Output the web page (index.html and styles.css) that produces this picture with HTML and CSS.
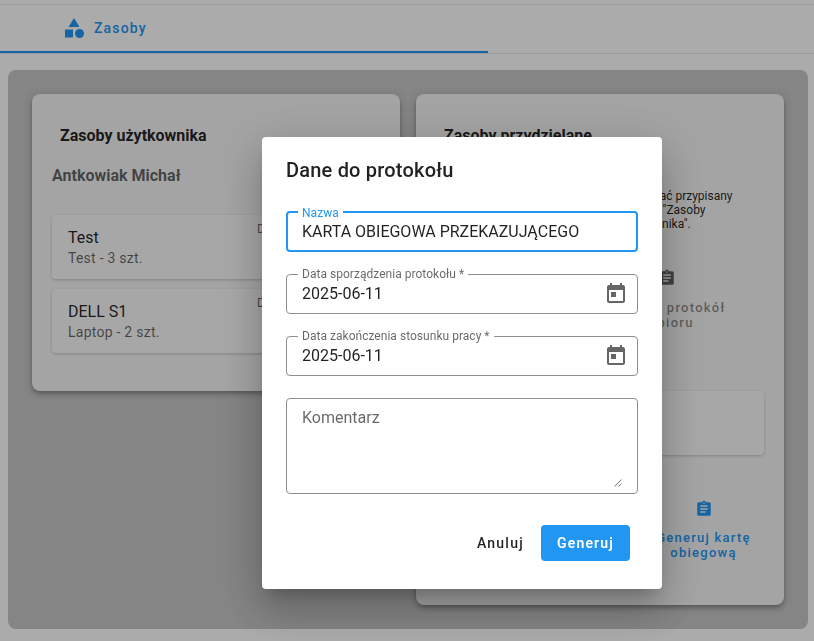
FILE: index.html
```html
<!DOCTYPE html>
<html lang="pl">
<head>
<meta charset="utf-8">
<title>Zasoby</title>
<link rel="stylesheet" href="styles.css">
</head>
<body>
<div class="page">
  <header class="topbar"></header>
  <nav class="tabs">
    <div class="tab">
      <svg class="tab-icon" viewBox="0 0 24 24"><path d="M11,13.5V21.5H3V13.5H11M12,2L17.5,11H6.5L12,2M17.5,13C20,13 22,15 22,17.5C22,20 20,22 17.5,22C15,22 13,20 13,17.5C13,15 15,13 17.5,13Z"/></svg>
      <span>Zasoby</span>
    </div>
  </nav>
  <main class="panel">
    <section class="card card-left">
      <h2 class="card-title">Zasoby użytkownika</h2>
      <div class="user">Antkowiak Michał</div>
      <div class="item">
        <div><div class="item-name">Test</div><div class="item-sub">Test - 3 szt.</div></div>
        <div class="item-date">Data: 2025-06-11</div>
      </div>
      <div class="item">
        <div><div class="item-name">DELL S1</div><div class="item-sub">Laptop - 2 szt.</div></div>
        <div class="item-date">Data: 2025-06-11</div>
      </div>
    </section>
    <section class="card card-right">
      <h2 class="card-title">Zasoby przydzielane</h2>
      <p class="hint">W celu przydzielenia zasobu należy wybrać przypisany<br>zasób, znajdujący się po prawej, w sekcji "Zasoby<br>znajdujące się w odrębnej sekcji użytkownika".</p>
      <div class="action action-grey">
        <svg class="action-icon" viewBox="0 0 24 24"><path d="M17,9H7V7H17M17,13H7V11H17M14,17H7V15H14M12,3A1,1 0 0,1 13,4A1,1 0 0,1 12,5A1,1 0 0,1 11,4A1,1 0 0,1 12,3M19,3H14.82C14.4,1.84 13.3,1 12,1C10.7,1 9.6,1.84 9.18,3H5A2,2 0 0,0 3,5V19A2,2 0 0,0 5,21H19A2,2 0 0,0 21,19V5A2,2 0 0,0 19,3Z"/></svg>
        <span>Generuj protokół<br>odbioru</span>
      </div>
      <div class="inner"></div>
      <div class="action action-blue">
        <svg class="action-icon" viewBox="0 0 24 24"><path d="M17,9H7V7H17M17,13H7V11H17M14,17H7V15H14M12,3A1,1 0 0,1 13,4A1,1 0 0,1 12,5A1,1 0 0,1 11,4A1,1 0 0,1 12,3M19,3H14.82C14.4,1.84 13.3,1 12,1C10.7,1 9.6,1.84 9.18,3H5A2,2 0 0,0 3,5V19A2,2 0 0,0 5,21H19A2,2 0 0,0 21,19V5A2,2 0 0,0 19,3Z"/></svg>
        <span>Generuj kartę<br>obiegową</span>
      </div>
    </section>
  </main>
</div>
<div class="backdrop"></div>
<div class="dialog" role="dialog">
  <h1 class="dialog-title">Dane do protokołu</h1>
  <div class="fields">
    <fieldset class="field field-focus">
      <legend>Nazwa</legend>
      <div class="value">KARTA OBIEGOWA PRZEKAZUJĄCEGO</div>
    </fieldset>
    <fieldset class="field">
      <legend>Data sporządzenia protokołu *</legend>
      <div class="value">2025-06-11</div>
      <svg class="cal" viewBox="0 0 24 24"><path d="M19 3h-1V1h-2v2H8V1H6v2H5c-1.11 0-1.99.9-1.99 2L3 19c0 1.1.89 2 2 2h14c1.1 0 2-.9 2-2V5c0-1.1-.9-2-2-2zm0 16H5V8h14v11zM7 10h5v5H7z"/></svg>
    </fieldset>
    <fieldset class="field">
      <legend>Data zakończenia stosunku pracy *</legend>
      <div class="value">2025-06-11</div>
      <svg class="cal" viewBox="0 0 24 24"><path d="M19 3h-1V1h-2v2H8V1H6v2H5c-1.11 0-1.99.9-1.99 2L3 19c0 1.1.89 2 2 2h14c1.1 0 2-.9 2-2V5c0-1.1-.9-2-2-2zm0 16H5V8h14v11zM7 10h5v5H7z"/></svg>
    </fieldset>
    <div class="area">
      <div class="placeholder">Komentarz</div>
      <svg class="grip" viewBox="0 0 8 8"><path d="M0.5 7.5L7.5 0.5M4.5 7.5L7.5 4.5"/></svg>
    </div>
  </div>
  <div class="buttons">
    <button class="btn btn-text">Anuluj</button>
    <button class="btn btn-primary">Generuj</button>
  </div>
</div>
</body>
</html>
```
FILE: styles.css
```css
* { box-sizing: border-box; }
html, body { margin: 0; height: 100%; overflow: hidden; }
body { font-family: Roboto, sans-serif; background: #fff; color: rgba(0,0,0,.87); }
.page { width: 814px; height: 641px; display: flex; flex-direction: column; }
.topbar { height: 5px; border-bottom: 1px solid #ececec; flex: none; }
.tabs { height: 49px; flex: none; border-bottom: 1px solid #e8e8e8; }
.tab { width: 488px; height: 48px; border-bottom: 2px solid #2196f3; color: #2196f3; display: flex; align-items: center; padding: 0 0 0 62px; gap: 8px; font-size: 14px; font-weight: 500; letter-spacing: 1.15px; }
.tab-icon { width: 24px; height: 24px; fill: #2196f3; }
.panel { flex: none; margin: 16px 6px 0 8px; height: 559px; background: #c6c6c6; border-radius: 8px; padding: 24px 24px; display: flex; gap: 16px; align-items: flex-start; }
.card { width: 368px; background: #f5f5f5; border-radius: 8px; box-shadow: 0 2px 4px -1px rgba(0,0,0,.2), 0 4px 5px rgba(0,0,0,.14), 0 1px 10px rgba(0,0,0,.12); position: relative; }
.card-left { height: 297px; padding: 32px 20px 0; }
.card-right { height: 511px; padding: 32px 20px 0; }
.card-title { margin: 0 0 0 8px; font-size: 16px; line-height: 20px; font-weight: 700; }
.user { margin-top: 19px; font-size: 16px; line-height: 22px; font-weight: 700; color: rgba(0,0,0,.6); }
.item { height: 64px; margin-top: 10px; background: #fafafa; border-radius: 4px; box-shadow: 0 1px 3px rgba(0,0,0,.2); padding: 12px 16px; display: flex; justify-content: space-between; }
.user + .item { margin-top: 28px; }
.item-name { font-size: 16px; line-height: 22px; }
.item-sub { font-size: 14px; line-height: 20px; margin-top: -1px; letter-spacing: .25px; color: rgba(0,0,0,.6); }
.item-date { font-size: 12px; line-height: 16px; color: rgba(0,0,0,.6); width: 123px; margin: -6px -16px 0 0; }
.hint { margin: 43px -8px 0 8px; font-size: 12px; line-height: 14px; white-space: nowrap; }
.action { display: flex; flex-direction: column; align-items: center; gap: 13px; text-align: center; font-size: 13px; font-weight: 500; letter-spacing: 1.25px; line-height: 15px; }
.action-icon { width: 18px; height: 18px; }
.action-grey { color: rgba(0,0,0,.45); fill: rgba(0,0,0,.6); margin: 38px 0 0 174px; width: 114px; white-space: nowrap; }
.inner { height: 64px; margin-top: 61px; background: #fafafa; border-radius: 4px; box-shadow: 0 1px 3px rgba(0,0,0,.2); }
.action-blue { gap: 12px; color: #2196f3; fill: #2196f3; margin: 45px 0 0 222px; width: 91px; white-space: nowrap; }
.backdrop { position: fixed; inset: 0; background: rgba(0,0,0,.33); }
.dialog { position: fixed; left: 262px; top: 137px; width: 400px; height: 452px; background: #fff; border-radius: 4px; padding: 19px 24px 0; box-shadow: 0 11px 15px -7px rgba(0,0,0,.2), 0 24px 38px 3px rgba(0,0,0,.14), 0 9px 46px 8px rgba(0,0,0,.12); }
.dialog-title { margin: 0; font-size: 20px; line-height: 28px; font-weight: 500; letter-spacing: .2px; }
.fields { margin-top: 22px; display: flex; flex-direction: column; gap: 22px; }
.field { margin: 0; padding: 0 15px; border: 1px solid #8f8f8f; border-radius: 4px; position: relative; display: block; min-width: 0; }
.field legend { padding: 0 4px; margin-left: -4px; font-size: 12px; line-height: 12px; height: 12px; color: rgba(0,0,0,.6); letter-spacing: .03px; }
.field-focus { border: 2px solid #2196f3; padding: 0 14px; }
.field-focus legend { color: #2196f3; line-height: 14px; }
.fields .field { margin-top: -6px; height: 46px; }
.fields .field:first-child { margin-top: 0; height: 46px; }
.value { font-size: 16px; line-height: 24px; margin-top: 2px; }
.cal { position: absolute; right: 9px; top: 2px; width: 24px; height: 24px; fill: rgba(0,0,0,.6); }
.area { height: 96px; border: 1px solid #8f8f8f; border-radius: 4px; padding: 7px 15px; position: relative; }
.placeholder { font-size: 16px; line-height: 24px; color: rgba(0,0,0,.6); }
.grip { position: absolute; right: 15px; bottom: 6px; width: 8px; height: 8px; stroke: #555; stroke-width: .8; fill: none; }
.buttons { display: flex; justify-content: flex-end; gap: 9px; margin-top: 31px; padding-right: 8px; }
.btn { height: 36px; border: 0; border-radius: 4px; font-family: Roboto, sans-serif; font-size: 14px; font-weight: 500; letter-spacing: 1.25px; padding: 0 16px; background: transparent; }
.btn-text { color: rgba(0,0,0,.87); padding: 0 8px; }
.btn-primary { background: #2196f3; color: #fff; font-weight: 600; letter-spacing: 1.15px; width: 89px; padding: 0; }
```
